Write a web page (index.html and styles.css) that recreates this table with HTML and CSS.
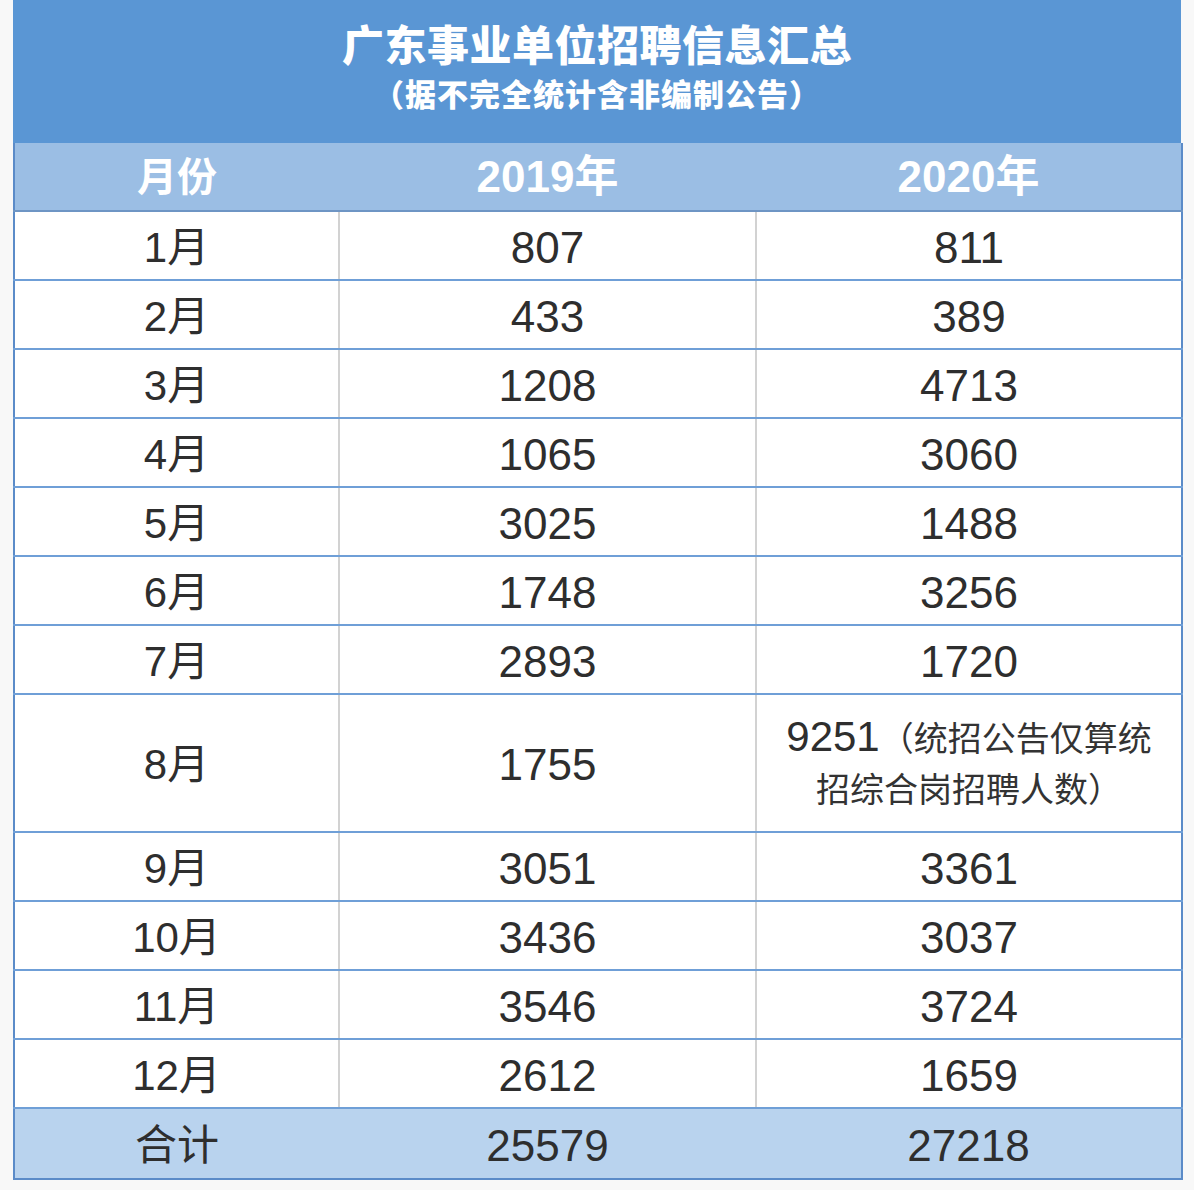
FILE: index.html
```
<!DOCTYPE html>
<html lang="zh-CN">
<head>
<meta charset="utf-8">
<title>广东事业单位招聘信息汇总</title>
<link rel="stylesheet" href="styles.css">
</head>
<body>
<div class="sheet">
  <div class="title-band">
    <div class="title">广东事业单位招聘信息汇总</div>
    <div class="subtitle">（据不完全统计含非编制公告）</div>
  </div>
  <table class="data">
    <colgroup>
      <col class="c1"><col class="c2"><col class="c3">
    </colgroup>
    <thead>
      <tr class="head"><th>月份</th><th>2019年</th><th>2020年</th></tr>
    </thead>
    <tbody>
      <tr><td>1月</td><td>807</td><td>811</td></tr>
      <tr><td>2月</td><td>433</td><td>389</td></tr>
      <tr><td>3月</td><td>1208</td><td>4713</td></tr>
      <tr><td>4月</td><td>1065</td><td>3060</td></tr>
      <tr><td>5月</td><td>3025</td><td>1488</td></tr>
      <tr><td>6月</td><td>1748</td><td>3256</td></tr>
      <tr><td>7月</td><td>2893</td><td>1720</td></tr>
      <tr class="tall"><td>8月</td><td>1755</td><td class="note"><span class="num">9251</span><span class="cn">（统招公告仅算统<br>招综合岗招聘人数）</span></td></tr>
      <tr><td>9月</td><td>3051</td><td>3361</td></tr>
      <tr><td>10月</td><td>3436</td><td>3037</td></tr>
      <tr><td>11月</td><td>3546</td><td>3724</td></tr>
      <tr><td>12月</td><td>2612</td><td>1659</td></tr>
      <tr class="total"><td>合计</td><td>25579</td><td>27218</td></tr>
    </tbody>
  </table>
</div>
</body>
</html>
```
FILE: styles.css
```
html, body {
  margin: 0;
  padding: 0;
  background: #f8f8f8;
}
body {
  font-family: "Liberation Sans", "Noto Sans CJK SC", sans-serif;
}
.sheet {
  width: 1168px;
  margin-left: 13px;
}
.title-band {
  height: 143px;
  background: #5a96d4;
  display: flex;
  flex-direction: column;
  align-items: center;
  box-sizing: border-box;
  padding-top: 20px;
  color: #ffffff;
  font-family: "Noto Sans CJK SC", sans-serif;
  font-weight: 900;
}
.title {
  font-size: 42px;
  line-height: 46px;
  letter-spacing: 0.5px;
}
.subtitle {
  font-size: 31px;
  line-height: 34px;
  letter-spacing: 1px;
  margin-top: 10px;
}
.data {
  width: 1168px;
  border-collapse: collapse;
  table-layout: fixed;
  border-left: 2px solid #5b8bc8;
  border-right: 2px solid #5b8bc8;
}
.c1 { width: 325px; }
.c2 { width: 417px; }
.c3 { width: 426px; }
.head th {
  height: 67px;
  background: #9bbee4;
  color: #ffffff;
  font-family: "Liberation Sans", "Noto Sans CJK SC", sans-serif;
  font-weight: 700;
  font-size: 40px;
  line-height: 1;
  padding: 0;
  border-bottom: 2px solid #6e95c4;
}
.head th + th {
  font-size: 44px;
}
.data td {
  height: 63px;
  padding: 4px 0 0 0;
  text-align: center;
  vertical-align: middle;
  font-size: 44px;
  line-height: 1;
  color: #2e2e2e;
  background: #ffffff;
  border-bottom: 2px solid #6f9fd7;
  border-left: 2px solid #d2d2d2;
}
.data td:first-child {
  border-left: none;
  font-size: 42px;
}
.data tr.tall td {
  height: 132px;
}
.data td.note {
  height: 136px;
  line-height: 48px;
  padding-top: 0;
}
.note .num {
  font-size: 42px;
}
.note .cn {
  font-size: 34px;
  color: #333333;
}
.data tr.total td {
  height: 65px;
  background: #b9d3ee;
  border-left: none;
  border-bottom: 2px solid #5b8bc8;
}
```
